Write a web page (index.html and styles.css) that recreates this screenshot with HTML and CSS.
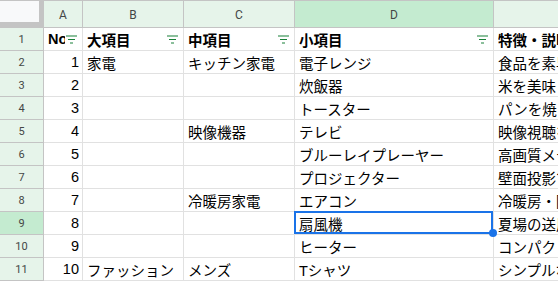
FILE: index.html
```html
<!DOCTYPE html>
<html lang="ja">

<head>
    <meta charset="UTF-8">
    <meta name="viewport" content="width=device-width, initial-scale=1.0">
    <title>Sheet</title>
    <link rel="stylesheet" href="styles.css">
</head>

<body>
    <div class="sheet">
        <!-- Column headers -->
        <div class="corner"></div>
        <div class="col-head">A</div>
        <div class="col-head">B</div>
        <div class="col-head">C</div>
        <div class="col-head active">D</div>
        <div class="col-head">E</div>

        <!-- Row 1: table header -->
        <div class="row-head">1</div>
        <div class="cell head"><span class="txt">No</span><svg class="filter" viewBox="0 0 11 9"><path d="M0 1h11M2 4.5h7M4 8h3" /></svg></div>
        <div class="cell head"><span class="txt">大項目</span><svg class="filter" viewBox="0 0 11 9"><path d="M0 1h11M2 4.5h7M4 8h3" /></svg></div>
        <div class="cell head"><span class="txt">中項目</span><svg class="filter" viewBox="0 0 11 9"><path d="M0 1h11M2 4.5h7M4 8h3" /></svg></div>
        <div class="cell head"><span class="txt">小項目</span><svg class="filter" viewBox="0 0 11 9"><path d="M0 1h11M2 4.5h7M4 8h3" /></svg></div>
        <div class="cell head"><span class="txt">特徴・説明</span></div>

        <div class="row-head">2</div>
        <div class="cell num">1</div>
        <div class="cell">家電</div>
        <div class="cell">キッチン家電</div>
        <div class="cell">電子レンジ</div>
        <div class="cell">食品を素早く温める</div>

        <div class="row-head">3</div>
        <div class="cell num">2</div>
        <div class="cell"></div>
        <div class="cell"></div>
        <div class="cell">炊飯器</div>
        <div class="cell">米を美味しく炊く</div>

        <div class="row-head">4</div>
        <div class="cell num">3</div>
        <div class="cell"></div>
        <div class="cell"></div>
        <div class="cell">トースター</div>
        <div class="cell">パンを焼く</div>

        <div class="row-head">5</div>
        <div class="cell num">4</div>
        <div class="cell"></div>
        <div class="cell">映像機器</div>
        <div class="cell">テレビ</div>
        <div class="cell">映像視聴を楽しむ</div>

        <div class="row-head">6</div>
        <div class="cell num">5</div>
        <div class="cell"></div>
        <div class="cell"></div>
        <div class="cell">ブルーレイプレーヤー</div>
        <div class="cell">高画質メディア再生</div>

        <div class="row-head">7</div>
        <div class="cell num">6</div>
        <div class="cell"></div>
        <div class="cell"></div>
        <div class="cell">プロジェクター</div>
        <div class="cell">壁面投影で大画面</div>

        <div class="row-head">8</div>
        <div class="cell num">7</div>
        <div class="cell"></div>
        <div class="cell">冷暖房家電</div>
        <div class="cell">エアコン</div>
        <div class="cell">冷暖房・除湿</div>

        <div class="row-head active">9</div>
        <div class="cell num">8</div>
        <div class="cell"></div>
        <div class="cell"></div>
        <div class="cell selected">扇風機<span class="sel-box"><span class="handle"></span></span></div>
        <div class="cell">夏場の送風</div>

        <div class="row-head">10</div>
        <div class="cell num">9</div>
        <div class="cell"></div>
        <div class="cell"></div>
        <div class="cell">ヒーター</div>
        <div class="cell">コンパクトな暖房</div>

        <div class="row-head">11</div>
        <div class="cell num">10</div>
        <div class="cell">ファッション</div>
        <div class="cell">メンズ</div>
        <div class="cell">Tシャツ</div>
        <div class="cell">シンプルなデザイン</div>
    </div>
</body>

</html>
```

FILE: styles.css
```css
/* General Styles */
body {
    margin: 0;
    background: #ffffff;
    font-family: 'Liberation Sans', 'Noto Sans CJK JP', sans-serif;
    color: #000000;
    overflow: hidden;
}

/* Sheet grid */
.sheet {
    display: grid;
    grid-template-columns: 44px 39px 101px 111px 199px 160px;
    grid-template-rows: 28px;
    grid-auto-rows: 23px;
    width: max-content;
}

/* Top-left corner with freeze bars */
.corner {
    background: #f8f9fa;
    border-right: 5px solid #c4c4c4;
    border-bottom: 6px solid #c4c4c4;
    border-top: 1px solid #c4c4c4;
    box-sizing: border-box;
}

/* Column letters */
.col-head {
    display: flex;
    justify-content: center;
    align-items: center;
    padding-top: 2px;
    box-sizing: border-box;
    background: #e6f4ea;
    border-top: 1px solid #c4c4c4;
    border-right: 1px solid #c4c4c4;
    border-bottom: 1px solid #c4c4c4;
    font-family: 'Roboto', 'Liberation Sans', sans-serif;
    font-size: 12px;
    color: #444746;
}

.col-head.active {
    background: #c4ebd0;
}

/* Row numbers */
.row-head {
    display: flex;
    justify-content: center;
    align-items: center;
    box-sizing: border-box;
    background: #e6f4ea;
    border-right: 1px solid #c4c4c4;
    border-bottom: 1px solid #c4c4c4;
    font-family: 'Roboto', 'Liberation Sans', sans-serif;
    font-size: 11px;
    color: #444746;
}

.row-head.active {
    background: #c4ebd0;
}

/* Cells */
.cell {
    position: relative;
    display: flex;
    align-items: center;
    padding: 0 3px 0 4px;
    box-sizing: border-box;
    border-right: 1px solid #e1e1e1;
    border-bottom: 1px solid #e1e1e1;
    font-size: 14.5px;
    white-space: nowrap;
    overflow: hidden;
}

.cell.num {
    justify-content: flex-end;
}

/* Header row with filter buttons */
.cell.head {
    font-weight: bold;
    padding-right: 5px;
}

.cell.head .txt {
    flex: 1;
    overflow: hidden;
}

.filter {
    width: 11px;
    height: 9px;
    margin-left: 1px;
    flex-shrink: 0;
    fill: none;
    stroke: #188038;
    stroke-width: 1.2;
}

/* Selected cell */
.cell.selected {
    overflow: visible;
}

.sel-box {
    position: absolute;
    top: -1px;
    left: -1px;
    right: 0;
    bottom: 0;
    border: 2px solid #1a73e8;
    z-index: 2;
}

.handle {
    position: absolute;
    right: -6px;
    bottom: -5px;
    width: 8px;
    height: 8px;
    border-radius: 50%;
    background: #1a73e8;
}
```
